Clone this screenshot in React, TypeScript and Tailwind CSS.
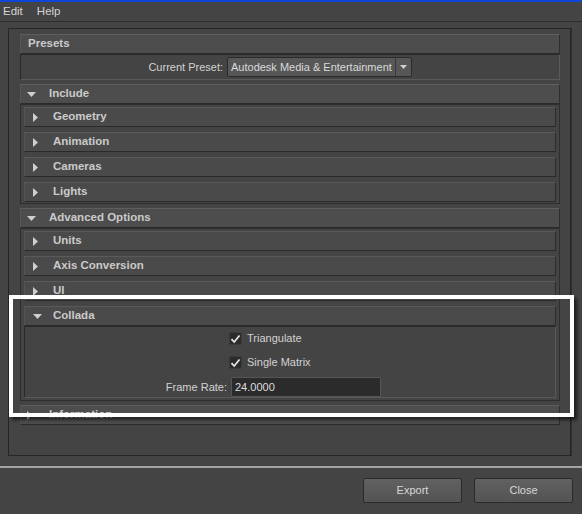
import React from "react";

const FONT = { fontFamily: '"Liberation Sans", Arial, sans-serif' };

function TriDown() {
  return (
    <svg width="9" height="5" viewBox="0 0 9 5" className="shrink-0">
      <polygon points="0,0 9,0 4.5,5" fill="#cfcfcf" />
    </svg>
  );
}
function TriRight() {
  return (
    <svg width="5" height="9" viewBox="0 0 5 9" className="shrink-0">
      <polygon points="0,0 5,4.5 0,9" fill="#cfcfcf" />
    </svg>
  );
}

function Header({ title, open }: { title: string; open?: boolean }) {
  return (
    <div className="h-[20px] flex items-center bg-[#4d4d4d] border-t border-t-[#5e5e5e] border-b border-b-[#2b2b2b] border-l border-l-[#565656] border-r border-r-[#2e2e2e]">
      {open === undefined ? (
        <span className="pl-[7px] text-[11.5px] font-bold text-[#cacaca]">{title}</span>
      ) : (
        <>
          <span className="pl-[6px] w-[28px] flex items-center">
            {open ? <TriDown /> : <TriRight />}
          </span>
          <span className="text-[11.5px] font-bold text-[#cacaca]">{title}</span>
        </>
      )}
    </div>
  );
}

function Row({ title, open }: { title: string; open?: boolean }) {
  return (
    <div className="h-[20px] flex items-center bg-[#4a4a4a] border-t border-t-[#5a5a5a] border-b border-b-[#2a2a2a] border-l border-l-[#545454] border-r border-r-[#2d2d2d]">
      <span className="pl-[8px] w-[28px] flex items-center">{open ? <TriDown /> : <TriRight />}</span>
      <span className="text-[11.5px] font-bold text-[#cacaca]">{title}</span>
    </div>
  );
}

function Check({ label }: { label: string }) {
  return (
    <div className="flex items-center h-[13px]">
      <div className="w-[204px]" />
      <div className="w-[13px] h-[13px] rounded-[2px] bg-[#2b2b2b] border border-[#3a3a3a] flex items-center justify-center">
        <svg width="11" height="10" viewBox="0 0 11 10">
          <path d="M1.5 5.2 L4.2 8 L9.5 1.5" stroke="#e6e6e6" strokeWidth="1.8" fill="none" />
        </svg>
      </div>
      <span className="ml-[5px] text-[11px] text-[#d2d2d2]">{label}</span>
    </div>
  );
}

export default function App() {
  return (
    <div className="w-[582px] h-[514px] bg-[#444444] relative overflow-hidden flex flex-col" style={FONT}>
      <div className="h-[2px] bg-[#0d46d8]" />
      <div className="h-[20px] flex items-center gap-[14px] pl-[3px] text-[11.5px] text-[#d4d4d4] border-b border-b-[#2e2e2e]">
        <span>Edit</span>
        <span>Help</span>
      </div>

      <div className="mt-[6px] ml-[8px] w-[564px] h-[428px] border border-[#262626] border-r-2 bg-[#444444]">
        <div className="h-full pl-[11px] pr-[11px] pt-[5px] flex flex-col border-r border-r-[#2f2f2f] mr-[-2px]">
          <div className="w-[540px] flex flex-col">
            <Header title="Presets" />
            <div className="h-[26px] border border-t-[#2a2a2a] border-l-[#2a2a2a] border-b-[#5a5a5a] border-r-[#5a5a5a] bg-[#444444] flex items-center">
              <span className="w-[202px] text-right text-[11px] text-[#d2d2d2] whitespace-nowrap">Current Preset:</span>
              <div className="ml-[4px] w-[185px] h-[20px] rounded-[2px] bg-[#575757] border border-[#2b2b2b] flex items-center">
                <span className="flex-1 pl-[3px] text-[11px] text-[#dadada] whitespace-nowrap overflow-hidden">Autodesk Media &amp; Entertainment</span>
                <div className="w-[16px] h-full border-l border-l-[#3a3a3a] flex items-center justify-center">
                  <svg width="7" height="4" viewBox="0 0 7 4">
                    <polygon points="0,0 7,0 3.5,4" fill="#cfcfcf" />
                  </svg>
                </div>
              </div>
            </div>

            <div className="mt-[4px]">
              <Header title="Include" open />
            </div>
            <div className="h-[100px] border border-[#2e2e2e] pt-[2px] px-[3px] flex flex-col gap-[5px]">
              <Row title="Geometry" />
              <Row title="Animation" />
              <Row title="Cameras" />
              <Row title="Lights" />
            </div>

            <div className="mt-[4px]">
              <Header title="Advanced Options" open />
            </div>
            <div className="border border-[#2e2e2e] pt-[2px] pb-[2px] px-[3px] flex flex-col gap-[5px]">
              <Row title="Units" />
              <Row title="Axis Conversion" />
              <Row title="UI" />
              <div className="flex flex-col">
                <Row title="Collada" open />
                <div className="h-[72px] border border-t-[#2a2a2a] border-l-[#2a2a2a] border-b-[#595959] border-r-[#595959] pt-[5px] flex flex-col">
                  <Check label="Triangulate" />
                  <div className="h-[11px]" />
                  <Check label="Single Matrix" />
                  <div className="mt-[8px] flex items-center h-[20px]">
                    <span className="w-[202px] text-right text-[11px] text-[#d2d2d2]">Frame Rate:</span>
                    <div className="ml-[4px] w-[150px] h-[20px] bg-[#2b2b2b] border border-[#555555] rounded-[1px] flex items-center pl-[3px] text-[11px] text-[#dedede]">
                      24.0000
                    </div>
                  </div>
                </div>
              </div>
            </div>

            <div className="mt-[4px]">
              <Header title="Information" open={false} />
            </div>
          </div>
        </div>
      </div>

      <div className="mt-[10px] h-[2px] bg-[#a3a3a3]" />

      <div className="mt-[10px] flex justify-end gap-[12px] pr-[9px]">
        <button className="w-[99px] h-[25px] rounded-[2px] border border-[#2a2a2a] bg-gradient-to-b from-[#616161] to-[#535353] text-[11px] text-[#d8d8d8]">
          Export
        </button>
        <button className="w-[99px] h-[25px] rounded-[2px] border border-[#2a2a2a] bg-gradient-to-b from-[#616161] to-[#535353] text-[11px] text-[#d8d8d8]">
          Close
        </button>
      </div>

      <div className="absolute left-[9px] top-[295px] w-[565px] h-[122px] border-[4px] border-white shadow-[3px_3px_3px_rgba(0,0,0,0.55)] pointer-events-none" />
    </div>
  );
}
